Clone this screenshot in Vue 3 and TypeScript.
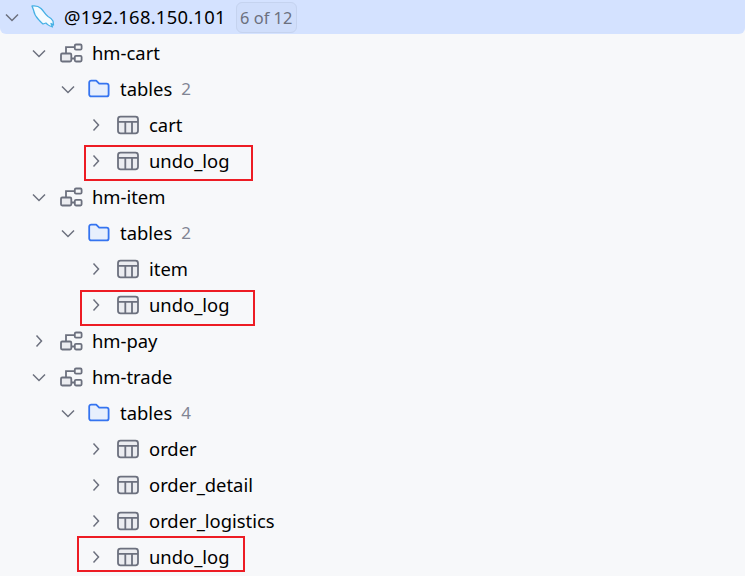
<template>
  <div class="tree">
    <div v-for="(row, i) in rows" :key="i" class="row" :class="{ selected: row.kind === 'server' }">
      <div class="arrow" :class="'d' + row.depth">
        <svg width="16" height="16" viewBox="0 0 16 16" fill="none" stroke="#6c707e" stroke-width="1.5">
          <path v-if="row.open" d="M2 5.5 8 11.5 14 5.5" />
          <path v-else d="M5.5 2.5 10.5 8 5.5 13.5" />
        </svg>
      </div>
      <div class="icon">
        <svg v-if="row.kind === 'server'" width="24" height="24" viewBox="0 0 24 24">
          <path d="M1 1C5 0.500 8 1.500 10 3.500C13 6.500 14 9.500 17 11.500C19 12.500 21 14 22 16L22.500 20L20 18.500L21.500 22C18.500 21 16 19.500 15 18L12 19C10 17.500 9 16 7.500 14.500C5 12 3 8 2.500 5Z" fill="#f4fbff" stroke="#45b0e5" stroke-width="1.3" stroke-linejoin="round" />
        </svg>
        <svg v-else-if="row.kind === 'db'" width="24" height="24" viewBox="0 0 24 24" fill="none" stroke="#6c707e" stroke-width="1.8">
          <rect x="2" y="12.500" width="10.300" height="8" rx="1.200" fill="#ebecf0" />
          <rect x="15.800" y="3.500" width="6.800" height="5.200" rx="1.200" />
          <rect x="15.800" y="14.800" width="6.800" height="5.700" rx="1.200" />
          <path d="M7 12.500V6.200h8.800M12.300 17.500h3.500" />
        </svg>
        <svg v-else-if="row.kind === 'folder'" width="24" height="24" viewBox="0 0 24 24" fill="#e7effd" stroke="#3574f0" stroke-width="1.8">
          <path d="M2.200 5.600a2 2 0 0 1 2-2h5l3 3h7.400a2 2 0 0 1 2 2v8.800a2 2 0 0 1-2 2H4.200a2 2 0 0 1-2-2z" stroke-linejoin="round" />
        </svg>
        <svg v-else width="24" height="24" viewBox="0 0 24 24" fill="none" stroke="#6c707e" stroke-width="1.8">
          <rect x="2" y="3.700" width="20" height="16.600" rx="2.500" fill="#ebecf0" />
          <path d="M2 8.800h20M9.300 8.800v11.500M16 8.800v11.500" />
        </svg>
      </div>
      <span class="name">{{ row.name }}</span>
      <span v-if="row.count" class="count">{{ row.count }}</span>
      <span v-if="row.badge" class="badge">{{ row.badge }}</span>
      <div v-if="row.mark" class="mark" :class="row.mark"></div>
    </div>
  </div>
</template>

<script setup lang="ts">
type Row = {
  name: string
  kind: 'server' | 'db' | 'folder' | 'table'
  depth: number
  open?: boolean
  count?: string
  badge?: string
  mark?: string
}

const table = (name: string, mark?: string): Row => ({ name, kind: 'table', depth: 3, mark })
const db = (name: string, open: boolean): Row => ({ name, kind: 'db', depth: 1, open })
const tables = (count: string): Row => ({ name: 'tables', kind: 'folder', depth: 2, open: true, count })

const rows: Row[] = [
  { name: '@192.168.150.101', kind: 'server', depth: 0, open: true, badge: '6 of 12' },
  db('hm-cart', true),
  tables('2'),
  table('cart'),
  table('undo_log', 'm1'),
  db('hm-item', true),
  tables('2'),
  table('item'),
  table('undo_log', 'm2'),
  db('hm-pay', false),
  db('hm-trade', true),
  tables('4'),
  table('order'),
  table('order_detail'),
  table('order_logistics'),
  table('undo_log', 'm3'),
]
</script>

<style scoped>
.tree {
  width: 745px;
  height: 576px;
  overflow: hidden;
  background: #f7f8fa;
  font-family: "Noto Sans", "Liberation Sans", sans-serif;
  font-size: 18.4px;
  color: #000;
}
.row {
  position: relative;
  display: flex;
  align-items: center;
  height: 36px;
}
.row:first-child {
  height: 34px;
  margin-bottom: 1px;
  background: #d4e2ff;
  border-radius: 0 0 6px 6px;
}
.row:first-child .name {
  letter-spacing: 0.26px;
}
.arrow {
  display: flex;
  justify-content: center;
  width: 16px;
  flex: none;
}
.d0 { margin-left: 4px; margin-right: 11px; }
.d1 { margin-left: 31px; margin-right: 12px; }
.d2 { margin-left: 60px; margin-right: 11px; }
.d3 { margin-left: 88px; margin-right: 12px; }
.icon {
  display: flex;
  width: 24px;
  height: 26px;
  align-items: center;
  justify-content: center;
  flex: none;
  margin-right: 9px;
}
.name {
  white-space: nowrap;
  padding-bottom: 2px;
}
.count {
  margin-left: 9px;
  padding-bottom: 2px;
  font-size: 17px;
  color: #818594;
}
.badge {
  box-sizing: border-box;
  margin-left: 10px;
  width: 61px;
  height: 31px;
  line-height: 29px;
  text-align: center;
  font-size: 16.4px;
  background: #d0defb;
  border: 1px solid #c5d3ef;
  border-radius: 6px;
  color: #6c707e;
}
.mark {
  position: absolute;
  border: 2px solid #ed1c24;
  box-sizing: border-box;
  height: 36px;
}
.m1 { left: 84px; top: 2px; width: 169px; }
.m2 { left: 80px; top: 3px; width: 175px; }
.m3 { left: 77px; top: -3px; width: 168px; }
</style>

<style>
html, body {
  margin: 0;
  background: #f7f8fa;
}
</style>
